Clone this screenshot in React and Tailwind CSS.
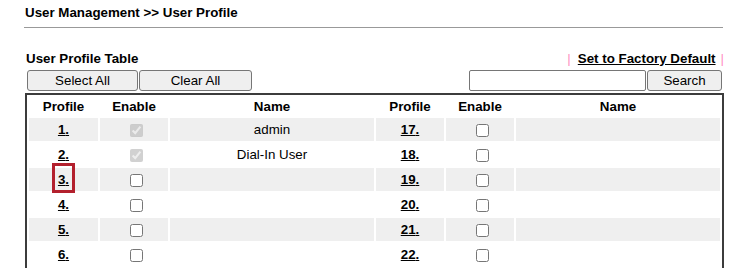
import { useState } from "react";

const left = [1, 2, 3, 4, 5, 6];
const names = { 1: "admin", 2: "Dial-In User" };

function ProfileLink({ n, marked }) {
  return (
    <span className="relative inline-block">
      <a href="#" className="font-bold underline text-black">
        {n}.
      </a>
      {marked && (
        <span className="absolute left-[-6px] right-[-6px] top-[-9px] bottom-[-6px] border-[3px] border-[#b3202d]" />
      )}
    </span>
  );
}

function Check({ on, locked }) {
  return (
    <input
      type="checkbox"
      defaultChecked={on}
      disabled={locked}
      className="w-[13px] h-[13px] m-0 ml-[4px] align-middle"
    />
  );
}

export default function App() {
  const [query, setQuery] = useState("");

  return (
    <div className="w-[743px] h-[268px] overflow-hidden bg-white text-black text-[13.33px] font-['Liberation_Sans',Arial,sans-serif]">
      {/* page title */}
      <div className="ml-[24px] w-[699px] h-[28px] pt-[5px] pl-[1px] leading-[15px] font-bold border-b border-[#999]">
        User Management &gt;&gt; User Profile
      </div>

      <div className="ml-[24px] w-[700px]">
        <div className="mt-[23px] flex items-center justify-between leading-[15px] pl-[2px]">
          <span className="font-bold">User Profile Table</span>
          <span className="font-bold">
            <span className="text-[#ff8fbf] font-normal">|</span>
            <a href="#" className="underline text-black ml-[7px] mr-[5px]">
              Set to Factory Default
            </a>
            <span className="text-[#ff8fbf] font-normal">|</span>
          </span>
        </div>

        <div className="mt-[4px] flex h-[21px] pl-[3px]">
          <button className="w-[111px] h-[21px] bg-[#efefef] border border-[#767676] rounded-[3px] text-[13.33px] leading-[19px]">
            Select All
          </button>
          <button className="ml-[1px] w-[113px] h-[21px] bg-[#efefef] border border-[#767676] rounded-[3px] text-[13.33px] leading-[19px]">
            Clear All
          </button>
          <div className="flex-1" />
          <input
            value={query}
            onChange={(e) => setQuery(e.target.value)}
            className="w-[177px] h-[21px] border border-[#767676] rounded-[2px] px-1 outline-none"
          />
          <button className="ml-[1px] mr-[2px] w-[75px] h-[21px] bg-[#efefef] border border-[#767676] rounded-[3px] text-[13.33px] leading-[19px]">
            Search
          </button>
        </div>

        <table className="mt-[2px] ml-[1px] w-[699px] border-2 border-[#3c3c3c] border-separate border-spacing-[2px] table-fixed">
          <colgroup>
            <col className="w-[69px]" />
            <col className="w-[68px]" />
            <col className="w-[204px]" />
            <col className="w-[68px]" />
            <col className="w-[68px]" />
            <col className="w-[204px]" />
          </colgroup>
          <thead>
            <tr className="h-[19px] font-bold leading-[15px]">
              <th className="p-0">Profile</th>
              <th className="p-0">Enable</th>
              <th className="p-0">Name</th>
              <th className="p-0">Profile</th>
              <th className="p-0">Enable</th>
              <th className="p-0">Name</th>
            </tr>
          </thead>
          <tbody>
            {left.map((n) => {
              const shade = n % 2 === 1 ? "bg-[#efefef]" : "bg-white";
              const right = n + 16;
              return (
                <tr key={n} className="h-[23px] leading-[15px] text-center">
                  <td className={`p-0 ${shade}`}>
                    <ProfileLink n={n} marked={n === 3} />
                  </td>
                  <td className={`p-0 ${shade}`}>
                    <Check on={n <= 2} locked={n <= 2} />
                  </td>
                  <td className={`p-0 ${shade}`}>{names[n] || ""}</td>
                  <td className={`p-0 ${shade}`}>
                    <ProfileLink n={right} />
                  </td>
                  <td className={`p-0 ${shade}`}>
                    <Check on={false} />
                  </td>
                  <td className={`p-0 ${shade}`}></td>
                </tr>
              );
            })}
          </tbody>
        </table>
      </div>
    </div>
  );
}
